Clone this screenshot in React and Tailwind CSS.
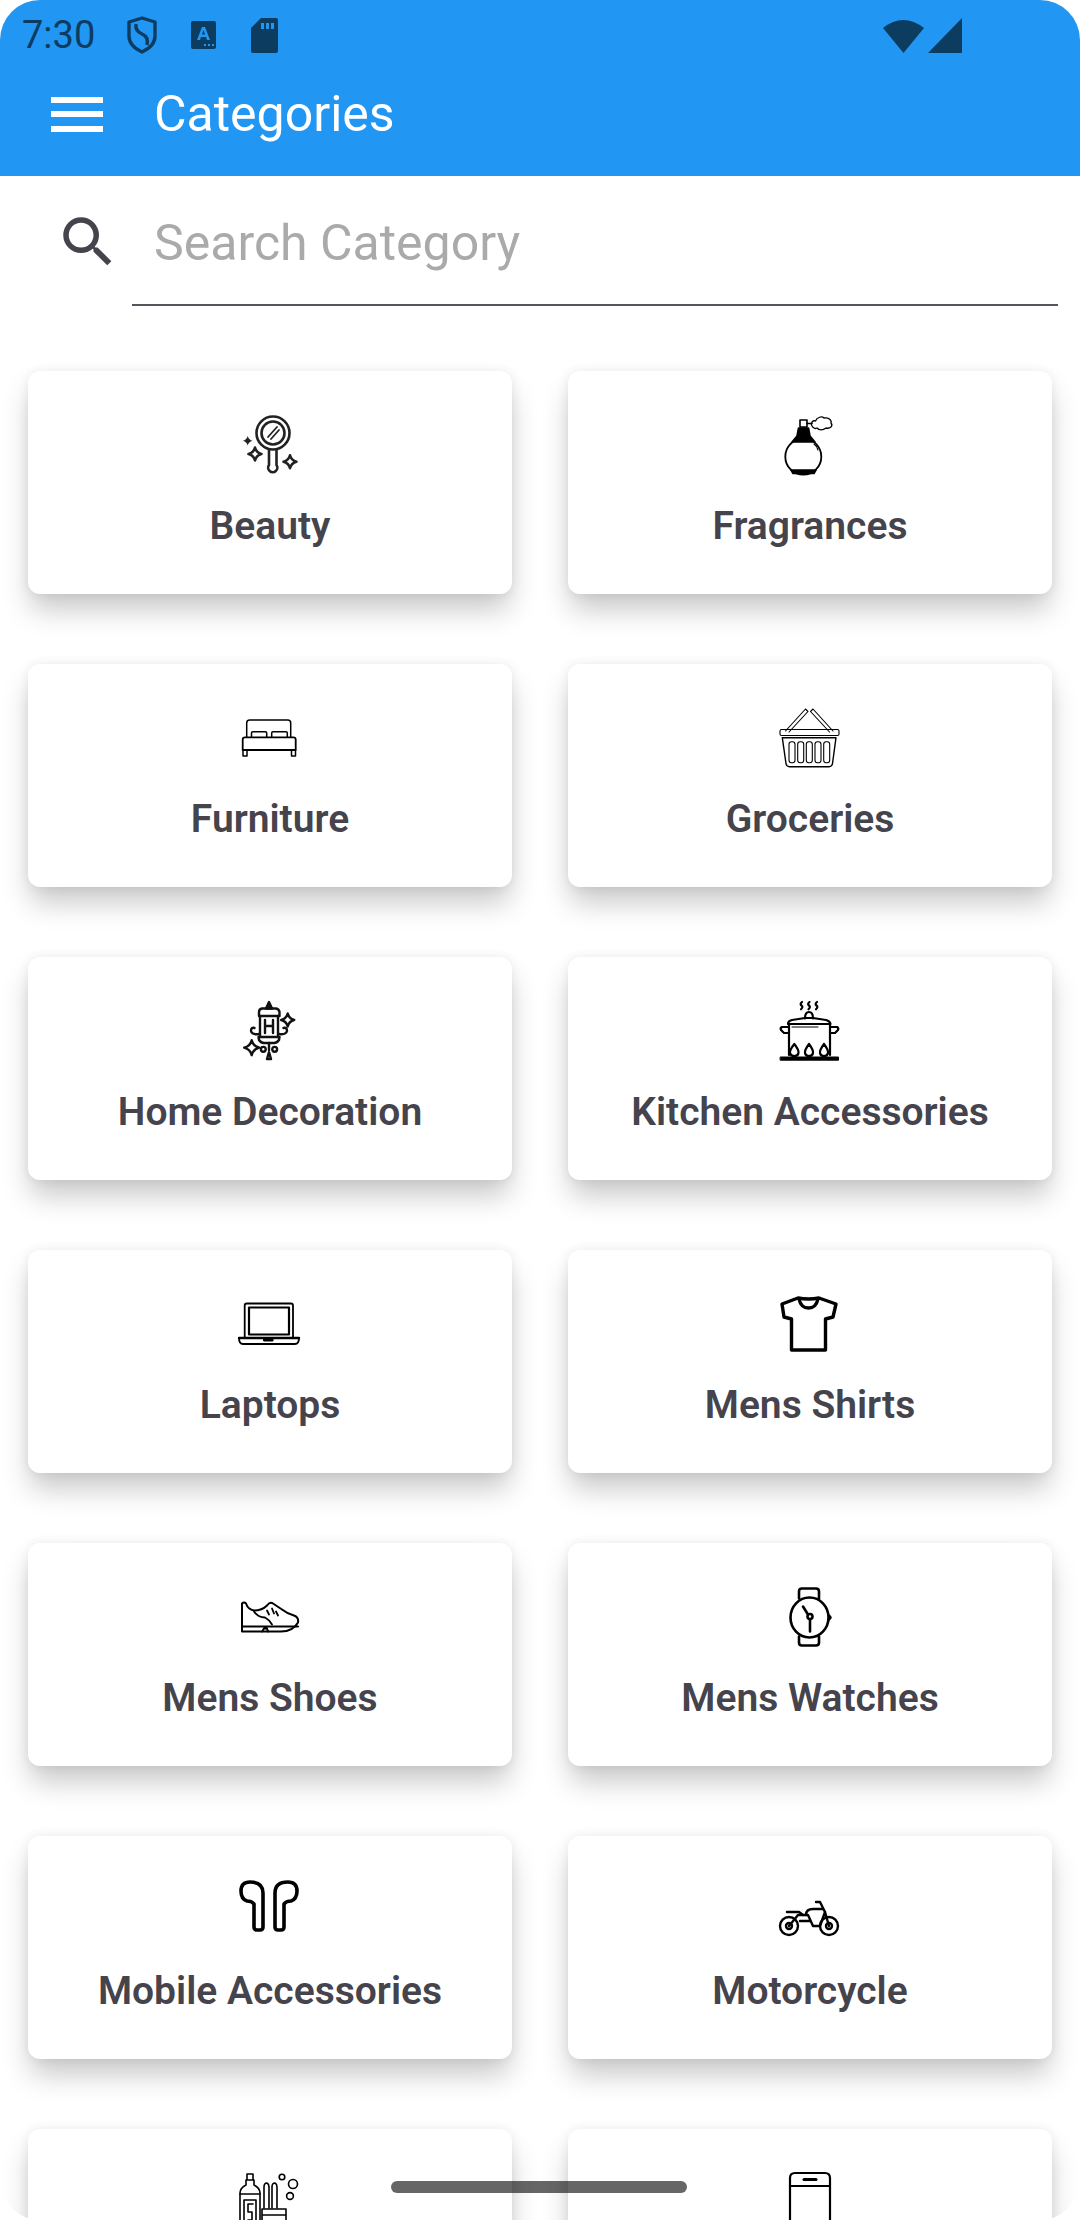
import React from "react";

const font = { fontFamily: "Roboto, sans-serif" };

// four pointed star used by the mirror and lamp icons
const star = (x, y, r) =>
  `M${x} ${y - r}Q${x + r * 0.2} ${y - r * 0.2} ${x + r} ${y}Q${x + r * 0.2} ${y + r * 0.2} ${x} ${y + r}Q${x - r * 0.2} ${y + r * 0.2} ${x - r} ${y}Q${x - r * 0.2} ${y - r * 0.2} ${x} ${y - r}Z`;

const Svg = ({ children, sw = 2 }) => (
  <svg width="64" height="64" viewBox="0 0 64 64" fill="none" stroke="#000" strokeWidth={sw} strokeLinecap="round" strokeLinejoin="round" className="block overflow-visible">
    {children}
  </svg>
);

const Mirror = () => (
  <Svg sw={2.6}>
    <circle cx="35" cy="21" r="16.5" stroke="#222" />
    <circle cx="35" cy="21" r="11.5" stroke="#222" />
    <path d="M30 25L39 15M33 27L41 18" stroke="#222" strokeWidth="1.8" />
    <path d="M31 37.5V53A4.6 4.6 0 1 0 38.5 53V37.5" stroke="#222" />
    <path d={star(9.7, 28.7, 4.8)} fill="#222" stroke="none" />
    <path d={star(17, 42, 6.5)} stroke="#222" />
    <path d={star(52, 49.7, 6.5)} stroke="#222" />
  </Svg>
);

const Perfume = () => (
  <Svg sw={1.6}>
    <rect x="22" y="8" width="7" height="7" />
    <path d="M29 11.5H34" />
    <path d="M34 14C32 11 35 8 37.5 9C39 5 44 4 46 6C50 5 54 8 53 11C55.5 14 52 17 48 16C45 18.5 41 18.5 39 16C37 17 35 16 34 14Z" strokeWidth="1.3" />
    <path d="M20.5 16H30.5L32 24L37 30H14L19 24Z" fill="#000" />
    <circle cx="25.3" cy="44.7" r="18" strokeWidth="1.8" />
    <path d="M36 32Q39 34 40 38" strokeWidth="1.1" />
    <path d="M13 58H38L36 61.5H15Z" fill="#000" />
  </Svg>
);

const Bed = () => (
  <Svg sw={1.5}>
    <path d="M8.7 32V18Q8.7 15 11.7 15H49.7Q52.7 15 52.7 18V32" />
    <path d="M13.5 32V28Q13.5 26.7 15 26.7H27.5Q28.7 26.7 28.7 28V32M33.7 32V28Q33.7 26.7 35 26.7H48Q49.3 26.7 49.3 28V32" />
    <path d="M4.7 45V34.5Q4.7 32.3 7 32.3H55.4Q57.7 32.3 57.7 34.5V45Z" strokeWidth="1.8" />
    <path d="M5 45V51H9V45M53.5 45V51H57.5V45" />
  </Svg>
);

const Basket = () => (
  <Svg sw={1.1}>
    <path d="M7.5 26L27.5 4L30 6.5L11 27M55 26L35 4L32.5 6.5L51.5 27" />
    <rect x="2" y="24.5" width="59" height="6" rx="1.5" />
    <path d="M4.3 32.7H58L54.5 58.5Q54 61.7 51 61.7H11.5Q8.5 61.7 8 58.5Z" strokeWidth="1.4" />
    {[11, 19.7, 28.3, 37, 45.7].map((x) => (
      <rect key={x} x={x} y="36.7" width="6" height="21" rx="2.5" />
    ))}
  </Svg>
);

const Lamp = () => (
  <Svg sw={2.4}>
    <path d="M31 4L34 10.5H28Z" fill="#111" stroke="#111" />
    <path d="M21 18V14Q21 11 24 10.5H38Q41 11 41.5 14V18Z" stroke="#111" />
    <path d="M22 18V39M40 18V39M27 22V35M35 22V35M27 28H35" stroke="#111" />
    <path d="M20.5 39H41.5L41 42Q39 45 36 45H26Q23 45 21 42Z" stroke="#111" />
    <path d="M21 36Q14 37 13 33Q13 29 16.5 30M41 36Q48 37 49 33Q49 29 45.5 30" stroke="#111" />
    <circle cx="25.3" cy="51.3" r="2.4" stroke="#111" />
    <circle cx="36.7" cy="51.3" r="2.4" stroke="#111" />
    <path d="M31 45V52M29 61L31 54L33 61Z" stroke="#111" />
    <path d={star(49.7, 22, 6.5)} stroke="#111" />
    <path d={star(13.7, 49.7, 7.5)} stroke="#111" />
  </Svg>
);

const Pot = () => (
  <Svg sw={2.2}>
    <path d="M24 4Q21.5 6 23.5 7.5Q25.5 9 23 11.3M31.5 4Q29 6 31 7.5Q33 9 30.5 11.3M39 4Q36.5 6 38.5 7.5Q40.5 9 38 11.3" />
    <path d="M27 20.5Q27 14 31 14Q35 14 35 20.5" />
    <path d="M10 26Q10 23 14 22L27 20H35L48 22Q52 23 52.5 26Z" />
    <path d="M11 26V57M52 26V57" />
    <path d="M10.5 29H4Q2 30 3 32L6 35H10.5M52.5 29H59Q61 30 60 32L57 35H52.5" />
    <path d="M16.3 46Q11.5 52 12 55Q12.5 58 16.3 58Q20 58 20.5 55Q21 52 16.3 46ZM31 46Q26.5 52 27 55Q27.5 58 31 58Q34.5 58 35 55Q35.5 52 31 46ZM46 46Q41.5 52 42 55Q42.5 58 46 58Q49.5 58 50 55Q50.5 52 46 46Z" />
    <rect x="2.5" y="59" width="58" height="3.2" fill="#000" strokeWidth="1" />
    <path d="M14 29H40" strokeWidth="1" />
  </Svg>
);

const Laptop = () => (
  <Svg sw={1.8}>
    <g transform="translate(0 2)">
      <path d="M6.7 45V12.5Q6.7 10.5 8.7 10.5H53Q55 10.5 55 12.5V45" />
      <rect x="11" y="14.5" width="40" height="27" strokeWidth="2.2" />
      <path d="M1 45H61Q61 51 57 51H5Q1 51 1 45Z" />
      <path d="M1 45H61" strokeWidth="2.4" />
      <path d="M26 46H35V48H26Z" fill="#000" strokeWidth="1" />
    </g>
  </Svg>
);

const Tee = () => (
  <Svg sw={3.4}>
    <path d="M20 7L4 13L6 26L13.5 28V59H47.5V28L55 26L58 13L41 7Q30.5 9 20 7Z" />
    <path d="M21 8Q23 17 30.5 17Q38 17 40 8" />
  </Svg>
);

const Shoe = () => (
  <Svg sw={2}>
    <g transform="translate(0 3.5)">
      <path d="M4 16V44H43Q55 44 60 35Q61 30 56 28Q49 26 44 22L35 16Q32 14 29 18Q24 23 16 23Q10 22 8 16Q6 14 4 16Z" />
      <path d="M4 39H60M30 44L29 41H26L24 44" />
      <path d="M16 24Q20 30 27 30Q31 32 34 37" strokeWidth="1.8" />
      <path d="M29 23L31 27M34 21L36 26M38 24L40 28" strokeWidth="1.8" />
    </g>
  </Svg>
);

const Watch = () => (
  <Svg sw={2.6}>
    <g transform="translate(0 3.5)">
      <path d="M21 11V4Q21 1 24 1H38Q41 1 41 4V11M21 49V55Q21 58 24 58H38Q41 58 41 55V49" />
      <ellipse cx="31.5" cy="30" rx="19" ry="20" />
      <circle cx="32" cy="29" r="2.5" />
      <path d="M32 32V44M30 27L25 19M51 28L52.5 30L51 32" />
    </g>
  </Svg>
);

const Buds = () => (
  <Svg sw={3.6}>
    <g transform="translate(0 3)">
      <path d="M3 11Q3 2 12 2Q25 2 25 13V47Q25 50 22 50H19Q16 50 16 47V24Q14 21 9 21Q3 19 3 11Z" />
      <path d="M59 11Q59 2 50 2Q37 2 37 13V47Q37 50 40 50H43Q46 50 46 47V24Q48 21 53 21Q59 19 59 11Z" />
    </g>
  </Svg>
);

const Motorcycle = () => (
  <Svg sw={2.4}>
    <g transform="translate(1 4)">
      <circle cx="10" cy="45" r="9" />
      <circle cx="10" cy="45" r="3" />
      <circle cx="50" cy="45" r="9" />
      <circle cx="50" cy="45" r="3" />
      <path d="M10 45L19 34H29L34 45H41L46 31L41 21H37" />
      <path d="M8 31H20L24 34M27 34Q27 28 34 28H44" />
      <path d="M46 31L50 45M21 40H31" />
    </g>
  </Svg>
);

const Toiletries = () => (
  <Svg sw={1.6}>
    <path d="M9 4H15V10H9ZM8 10H16V15Q22 18 22 23V66H2V23Q2 18 8 15Z" />
    <path d="M2 24H22M6 30H18V60H6ZM15 34H10V42H14V50H10" />
    <path d="M26 38V17Q26 13 29 13Q31 14 31 17V38M34 38V17Q34 13 37 13Q39 14 39 17V38" />
    <path d="M24 39H48V66H24ZM24 45H48" />
    <circle cx="44" cy="7" r="2.8" />
    <circle cx="55" cy="14" r="4.5" />
    <circle cx="52" cy="26" r="3.4" />
  </Svg>
);

const Phone = () => (
  <Svg sw={2.2}>
    <path d="M12 60V8Q12 3 17 3H47Q52 3 52 8V60" />
    <path d="M12 16H52" />
    <path d="M26 9.5H38" strokeWidth="3" />
  </Svg>
);

// the last two cards run off the bottom of the screen before their labels
const categories = [
  { id: 1, name: "Beauty", Icon: Mirror },
  { id: 2, name: "Fragrances", Icon: Perfume },
  { id: 3, name: "Furniture", Icon: Bed },
  { id: 4, name: "Groceries", Icon: Basket },
  { id: 5, name: "Home Decoration", Icon: Lamp },
  { id: 6, name: "Kitchen Accessories", Icon: Pot },
  { id: 7, name: "Laptops", Icon: Laptop },
  { id: 8, name: "Mens Shirts", Icon: Tee },
  { id: 9, name: "Mens Shoes", Icon: Shoe },
  { id: 10, name: "Mens Watches", Icon: Watch },
  { id: 11, name: "Mobile Accessories", Icon: Buds },
  { id: 12, name: "Motorcycle", Icon: Motorcycle },
  { id: 13, name: "", Icon: Toiletries },
  { id: 14, name: "", Icon: Phone },
];

const StatusBar = () => (
  <div className="flex h-[68px] items-center pl-[22px] pr-[118px] pt-[2px] text-[#0d3c61]">
    <span className="text-[38px] leading-[40px]">7:30</span>
    <svg className="ml-[32px]" width="30" height="38" viewBox="0 0 30 38" fill="none">
      <path d="M15 2L28 6V20Q28 30 15 36Q2 30 2 20V6Z" stroke="#0d3c61" strokeWidth="3.4" strokeLinejoin="round" />
      <path d="M9 8Q8 15 15 18Q22 21 20 29" stroke="#0d3c61" strokeWidth="3.4" fill="none" />
    </svg>
    <svg className="ml-[34px]" width="25" height="28" viewBox="0 0 25 28">
      <rect width="25" height="28" rx="2" fill="#0d3c61" />
      <path d="M6 19L11 6H14L19 19H16L15 16H10L9 19ZM11 13.5H14L12.5 9Z" fill="#2196f3" />
      <path d="M13 23H15V25H13ZM17 23H19V25H17ZM21 23H23V25H21Z" fill="#2196f3" />
    </svg>
    <svg className="ml-[35px]" width="27" height="35" viewBox="0 0 27 35">
      <path d="M10 0H25Q27 0 27 2V33Q27 35 25 35H2Q0 35 0 33V10Z" fill="#0d3c61" />
      <path d="M10 5H13V11H10ZM15 5H18V11H15ZM20 5H23V11H20Z" fill="#2196f3" />
    </svg>
    <svg className="ml-auto" width="41" height="35" viewBox="0 0 41 35">
      <path d="M0 10Q20 -6 41 10L20.5 35Z" fill="#0d3c61" />
    </svg>
    <svg className="ml-[4px]" width="34" height="35" viewBox="0 0 34 35">
      <path d="M34 0V35H0Z" fill="#0d3c61" />
    </svg>
  </div>
);

const App = () => {
  return (
    <div className="relative h-[2220px] w-[1080px] overflow-hidden rounded-[40px] bg-white" style={font}>
      <header className="h-[176px] bg-[#2196f3]">
        <StatusBar />
        <div className="flex h-[92px] items-center pl-[51px]">
          <div className="flex h-[35px] w-[52px] flex-col justify-between">
            <div className="h-[6px] bg-white" />
            <div className="h-[6px] bg-white" />
            <div className="h-[6px] bg-white" />
          </div>
          <h1 className="ml-[51px] text-[50px] leading-[56px] font-normal text-white">Categories</h1>
        </div>
      </header>

      {/* Search */}
      <div className="flex h-[130px] pl-[55px] pr-[22px]">
        <svg className="mt-[33px]" width="66" height="66" viewBox="0 0 24 24" fill="#45434b">
          <path d="M15.5 14h-.79l-.28-.27A6.47 6.47 0 0 0 16 9.5 6.5 6.5 0 1 0 9.5 16c1.61 0 3.09-.59 4.23-1.57l.27.28v.79l5 4.99L20.49 19l-4.99-5zm-6 0C7.01 14 5 11.99 5 9.5S7.01 5 9.5 5 14 7.01 14 9.5 11.99 14 9.5 14z" />
        </svg>
        <div className="ml-[11px] flex-1 border-b-[2px] border-[#55535b] pl-[22px] pt-[39px] text-[50px] leading-[56px] text-[#aaaaaa]">
          Search Category
        </div>
      </div>

      {/* Category grid */}
      <div className="grid grid-cols-2 gap-x-[56px] gap-y-[70px] px-[28px] pt-[65px]">
        {categories.map(({ id, name, Icon }) => (
          <div
            key={id}
            className="flex h-[223px] flex-col items-center rounded-[12px] bg-white pt-[41px] shadow-[0_18px_28px_-2px_rgba(0,0,0,0.21),0_0_12px_rgba(0,0,0,0.07)]"
          >
            <Icon />
            {name && <div className="mt-[28px] text-[39px] leading-[44px] font-semibold text-[#45434c]">{name}</div>}
          </div>
        ))}
      </div>

      {/* Home indicator */}
      <div className="absolute left-[391px] top-[2181px] h-[12px] w-[296px] rounded-full bg-black/60" />
    </div>
  );
};

export default App;
